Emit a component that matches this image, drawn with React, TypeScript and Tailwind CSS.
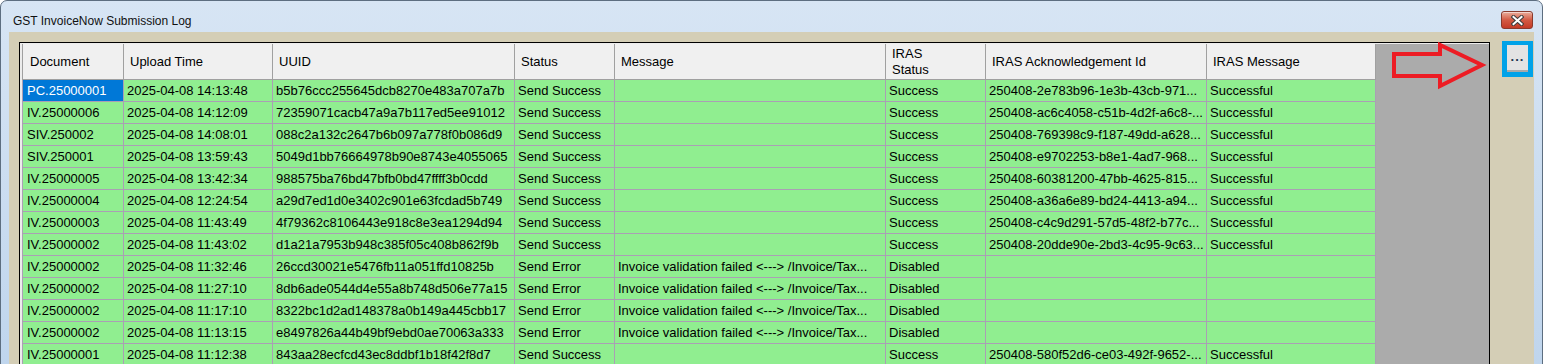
import React from "react";

type Row = {
  doc: string;
  time: string;
  uuid: string;
  status: string;
  message: string;
  irasStatus: string;
  ackId: string;
  irasMessage: string;
};

const okRow = (doc: string, time: string, uuid: string, ackId: string): Row => ({
  doc,
  time,
  uuid,
  status: "Send Success",
  message: "",
  irasStatus: "Success",
  ackId,
  irasMessage: "Successful",
});

const errRow = (doc: string, time: string, uuid: string): Row => ({
  doc,
  time,
  uuid,
  status: "Send Error",
  message: "Invoice validation failed <---> /Invoice/Tax...",
  irasStatus: "Disabled",
  ackId: "",
  irasMessage: "",
});

const rows: Row[] = [
  okRow("PC.25000001", "2025-04-08 14:13:48", "b5b76ccc255645dcb8270e483a707a7b", "250408-2e783b96-1e3b-43cb-971..."),
  okRow("IV.25000006", "2025-04-08 14:12:09", "72359071cacb47a9a7b117ed5ee91012", "250408-ac6c4058-c51b-4d2f-a6c8-..."),
  okRow("SIV.250002", "2025-04-08 14:08:01", "088c2a132c2647b6b097a778f0b086d9", "250408-769398c9-f187-49dd-a628..."),
  okRow("SIV.250001", "2025-04-08 13:59:43", "5049d1bb76664978b90e8743e4055065", "250408-e9702253-b8e1-4ad7-968..."),
  okRow("IV.25000005", "2025-04-08 13:42:34", "988575ba76bd47bfb0bd47ffff3b0cdd", "250408-60381200-47bb-4625-815..."),
  okRow("IV.25000004", "2025-04-08 12:24:54", "a29d7ed1d0e3402c901e63fcdad5b749", "250408-a36a6e89-bd24-4413-a94..."),
  okRow("IV.25000003", "2025-04-08 11:43:49", "4f79362c8106443e918c8e3ea1294d94", "250408-c4c9d291-57d5-48f2-b77c..."),
  okRow("IV.25000002", "2025-04-08 11:43:02", "d1a21a7953b948c385f05c408b862f9b", "250408-20dde90e-2bd3-4c95-9c63..."),
  errRow("IV.25000002", "2025-04-08 11:32:46", "26ccd30021e5476fb11a051ffd10825b"),
  errRow("IV.25000002", "2025-04-08 11:27:10", "8db6ade0544d4e55a8b748d506e77a15"),
  errRow("IV.25000002", "2025-04-08 11:17:10", "8322bc1d2ad148378a0b149a445cbb17"),
  errRow("IV.25000002", "2025-04-08 11:13:15", "e8497826a44b49bf9ebd0ae70063a333"),
  okRow("IV.25000001", "2025-04-08 11:12:38", "843aa28ecfcd43ec8ddbf1b18f42f8d7", "250408-580f52d6-ce03-492f-9652-..."),
];

const headers: React.ReactNode[] = [
  "Document",
  "Upload Time",
  "UUID",
  "Status",
  "Message",
  <>
    IRAS
    <br />
    Status
  </>,
  "IRAS Acknowledgement Id",
  "IRAS Message",
];

const gridCols = "grid grid-cols-[102px_149px_242px_100px_271px_100px_221px_169px]";

const CloseButton = () => (
  <div className="w-[32px] h-[18px] rounded-[3px] border border-[#8a3a2c] bg-gradient-to-b from-[#e8ad9c] via-[#d35a43] to-[#c43a26] flex items-center justify-center shadow-[inset_0_1px_0_rgba(255,255,255,0.5)]">
    <svg width="13" height="11" viewBox="0 0 13 11">
      <path d="M2.5 2 L10.5 9 M10.5 2 L2.5 9" stroke="#3d3d3d" strokeWidth="4" strokeLinecap="square" />
      <path d="M2.5 2 L10.5 9 M10.5 2 L2.5 9" stroke="#ffffff" strokeWidth="2" strokeLinecap="square" />
    </svg>
  </div>
);

const App: React.FC = () => {
  return (
    <div
      className="relative w-[1543px] h-[364px] overflow-hidden bg-white text-[13px] text-black"
      style={{ fontFamily: '"Liberation Sans", Arial, sans-serif' }}
    >
      <div className="h-[420px] border border-[#5d6e80] rounded-t-[7px] bg-gradient-to-b from-[#d7e5f4] to-[#bcd3ec] flex flex-col">
        {/* title bar */}
        <div className="h-[31px] shrink-0 flex items-start">
          <div className="pl-[12px] pt-[13px] text-[12px] leading-[14px] text-[#111]">
            GST InvoiceNow Submission Log
          </div>
          <div className="ml-auto mr-[9px] mt-[10px]">
            <CloseButton />
          </div>
        </div>

        {/* client area */}
        <div className="flex-1 mx-[8px] bg-[#d4ceb6] flex items-start pl-[10px] pt-[10px]">
          <div className="w-[1471px] h-[360px] shrink-0 border border-black bg-[#ababab]">
            <div className="border-l-2 border-t border-[#ececec] h-full">
              <div className={gridCols}>
                {headers.map((h, i) => (
                  <div
                    key={i}
                    className={
                      i === 0
                        ? "h-[36px] bg-[#f0f0f0] border-b border-r border-l border-[#a0a0a0] flex items-center pl-[7px] leading-[16px]"
                        : "h-[36px] bg-[#f0f0f0] border-b border-r border-[#a0a0a0] flex items-center pl-[6px] leading-[16px]"
                    }
                  >
                    <span>{h}</span>
                  </div>
                ))}
                {rows.map((r, ri) =>
                  [r.doc, r.time, r.uuid, r.status, r.message, r.irasStatus, r.ackId, r.irasMessage].map((v, ci) => {
                    const selected = ri === 0 && ci === 0;
                    let cls =
                      "h-[22px] border-b border-r border-[#aa9fb4] flex items-center whitespace-nowrap overflow-hidden pl-[3px]";
                    if (ci === 0) cls += " border-l pl-[4px]";
                    cls += selected ? " bg-[#0078d7] text-white" : " bg-[#90ee90]";
                    return (
                      <div key={`${ri}-${ci}`} className={cls}>
                        {v}
                      </div>
                    );
                  })
                )}
              </div>
            </div>
          </div>

          {/* "..." button with highlight frame */}
          <div className="ml-[12px] -mt-px w-[31px] h-[36px] shrink-0 bg-[#00a2e8] pt-[4px] pl-[5px]">
            <div className="w-[21px] h-[27px] bg-[#e3e3e3] border-b-2 border-[#a9a9a9] flex items-center justify-center">
              <span className="text-[13px] font-bold leading-none text-[#1f3550] -mt-[2px] tracking-[1px]">...</span>
            </div>
          </div>
        </div>
      </div>

      {/* red arrow annotation */}
      <svg className="absolute left-[1388px] top-[38px]" width="100" height="56" viewBox="1388 38 100 56">
        <polygon
          points="1394,54 1440,54 1440,45 1482,65 1440,86 1440,76 1394,76"
          fill="none"
          stroke="#ed1c24"
          strokeWidth="4"
          strokeLinejoin="miter"
        />
      </svg>
    </div>
  );
};

export default App;
